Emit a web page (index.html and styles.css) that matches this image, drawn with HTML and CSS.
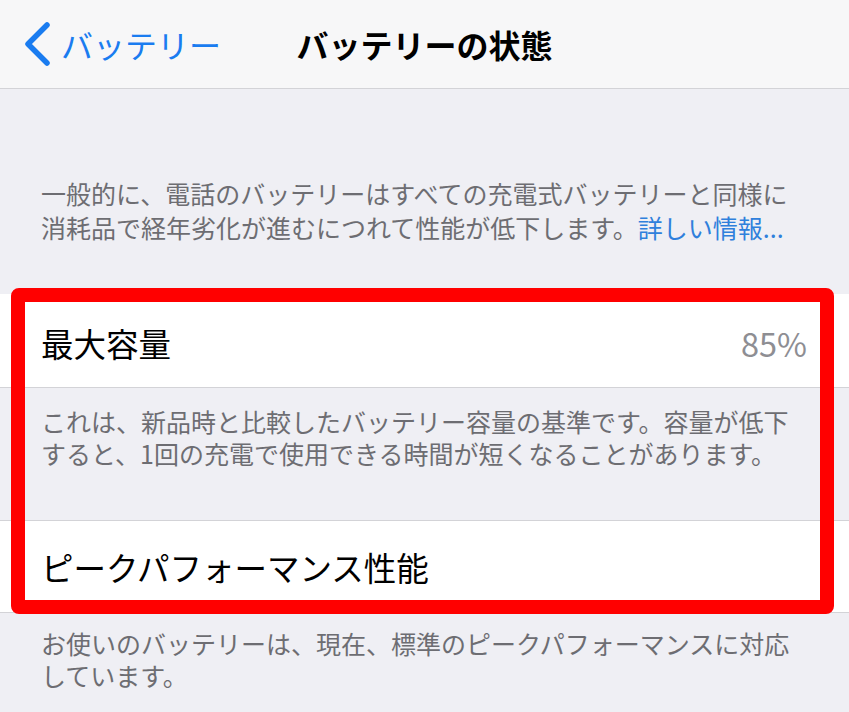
FILE: index.html
```html
<!DOCTYPE html>
<html lang="ja">
<head>
    <meta charset="UTF-8">
    <meta name="viewport" content="width=device-width, initial-scale=1.0">
    <title>バッテリーの状態</title>
    <link rel="stylesheet" href="styles.css">
</head>
<body>
    <header class="navbar">
        <a class="back" href="#">
            <svg class="chevron" width="28" height="44" viewBox="0 0 28 44">
                <polyline points="23,3 4,22 23,41" fill="none" stroke="#1a7cf0" stroke-width="5.5" stroke-linecap="round" stroke-linejoin="round"/>
            </svg>
            <span>バッテリー</span>
        </a>
        <h1 class="title">バッテリーの状態</h1>
        <div></div>
    </header>

    <p class="intro">一般的に、電話のバッテリーはすべての充電式バッテリーと同様に<br>消耗品で経年劣化が進むにつれて性能が低下します。<a href="#" class="link">詳しい情報...</a></p>

    <section class="highlight">
        <div class="cell first">
            <span class="label">最大容量</span>
            <span class="value">85%</span>
        </div>
        <p class="note">これは、新品時と比較したバッテリー容量の基準です。容量が低下<br>すると、1回の充電で使用できる時間が短くなることがあります。</p>
        <div class="cell second">
            <span class="label">ピークパフォーマンス性能</span>
        </div>
    </section>

    <p class="note footer">お使いのバッテリーは、現在、標準のピークパフォーマンスに対応<br>しています。</p>
</body>
</html>
```

FILE: styles.css
```css
* {
    margin: 0;
    padding: 0;
    box-sizing: border-box;
}

body {
    font-family: "Noto Sans CJK JP", "Noto Sans", sans-serif;
    background-color: #efeff4;
    color: #000;
    width: 849px;
    height: 712px;
    overflow: hidden;
    text-spacing-trim: space-all;
}

a {
    text-decoration: none;
}

.navbar {
    display: grid;
    grid-template-columns: 1fr auto 1fr;
    align-items: center;
    height: 89px;
    background-color: #f7f7f8;
    border-bottom: 1px solid #d3d3d7;
}

.back {
    display: flex;
    align-items: center;
    gap: 9px;
    padding-left: 24px;
    color: #1a7cf0;
    font-size: 32px;
    line-height: 40px;
}

.chevron {
    flex-shrink: 0;
}

.title {
    font-size: 32px;
    font-weight: 700;
    line-height: 40px;
}

.intro {
    padding: 87px 10px 50px 41px;
    font-size: 25px;
    line-height: 34px;
    color: #6d6d72;
    white-space: nowrap;
}

.link {
    color: #2f80dc;
}

.highlight {
    position: relative;
}

.highlight::after {
    content: "";
    position: absolute;
    top: -6px;
    bottom: -1px;
    left: 11px;
    right: 15px;
    border: 14px solid #ff0000;
    border-radius: 8px;
    pointer-events: none;
}

.cell {
    display: flex;
    align-items: center;
    justify-content: space-between;
    background-color: #fff;
    padding: 0 42px 0 41px;
    font-size: 32.5px;
    line-height: 40px;
    border-bottom: 1px solid #d3d3d7;
}

.cell.first {
    height: 94px;
    padding-top: 4px;
}

.cell.second {
    height: 93px;
    border-top: 1px solid #d3d3d7;
}

.value {
    color: #8e8e93;
}

.note {
    padding: 17px 10px 51px 41px;
    font-size: 25px;
    line-height: 32px;
    color: #6d6d72;
    white-space: nowrap;
}

.note.footer {
    padding-top: 14px;
}
```
